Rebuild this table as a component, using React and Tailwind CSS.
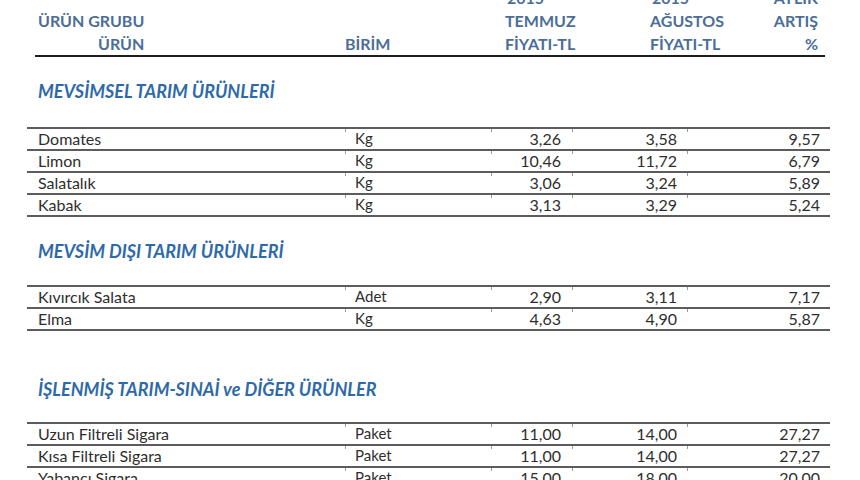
import React from "react";

const font = { fontFamily: "Lato, 'Open Sans', sans-serif" };

const sections = [
  {
    title: "MEVSİMSEL TARIM ÜRÜNLERİ",
    gapTop: "mt-[23px]",
    gapBottom: "mt-[24px]",
    rows: [
      ["Domates", "Kg", "3,26", "3,58", "9,57"],
      ["Limon", "Kg", "10,46", "11,72", "6,79"],
      ["Salatalık", "Kg", "3,06", "3,24", "5,89"],
      ["Kabak", "Kg", "3,13", "3,29", "5,24"],
    ],
  },
  {
    title: "MEVSİM DIŞI TARIM ÜRÜNLERİ",
    gapTop: "mt-[23px]",
    gapBottom: "mt-[22px]",
    rows: [
      ["Kıvırcık Salata", "Adet", "2,90", "3,11", "7,17"],
      ["Elma", "Kg", "4,63", "4,90", "5,87"],
    ],
  },
  {
    title: "İŞLENMİŞ TARIM-SINAİ ve DİĞER ÜRÜNLER",
    gapTop: "mt-[47px]",
    gapBottom: "mt-[21px]",
    rows: [
      ["Uzun Filtreli Sigara", "Paket", "11,00", "14,00", "27,27"],
      ["Kısa Filtreli Sigara", "Paket", "11,00", "14,00", "27,27"],
      ["Yabancı Sigara", "Paket", "15,00", "18,00", "20,00"],
    ],
  },
];

const tick =
  "relative before:content-[''] before:absolute before:left-0 before:top-0 before:h-[3px] before:w-px before:bg-[#9a9a9a]";

function Row({ r, last }) {
  return (
    <div
      className={
        "grid grid-cols-[318px_146px_81px_115px_143px] border-t-2 border-[#5c5c5c] text-[16px] leading-[20px] text-[#2e2e2e] " +
        (last ? "border-b-2 h-[24px]" : "h-[22px]")
      }
    >
      <div className="pl-[11px] whitespace-nowrap">{r[0]}</div>
      <div className={"pl-[10px] text-[15px] leading-[18px] " + tick}>{r[1]}</div>
      <div className={"pr-[11px] text-right " + tick}>{r[2]}</div>
      <div className={"pr-[10px] text-right " + tick}>{r[3]}</div>
      <div className={"pr-[10px] text-right " + tick}>{r[4]}</div>
    </div>
  );
}

export default function App() {
  return (
    <div className="w-[860px] h-[480px] overflow-hidden bg-white" style={font}>
      <div className="ml-[27px] w-[803px]">
        {/* Header */}
        <div className="mt-[-14px] ml-[8px] mr-[5px] border-b-2 border-[#1e1e1e] text-[16px] font-bold leading-[23px] text-[#4b6e98]">
          <div className="grid grid-cols-[310px_160px_145px_110px_65px]">
            <div></div>
            <div></div>
            <div className="pl-[2px]">2015</div>
            <div className="pl-[2px]">2015</div>
            <div className="text-right pr-[7px]">AYLIK</div>
          </div>
          <div className="grid grid-cols-[310px_160px_145px_110px_65px]">
            <div className="pl-[3px]">ÜRÜN GRUBU</div>
            <div></div>
            <div>TEMMUZ</div>
            <div>AĞUSTOS</div>
            <div className="text-right pr-[7px]">ARTIŞ</div>
          </div>
          <div className="grid grid-cols-[310px_160px_145px_110px_65px]">
            <div className="pl-[63px]">ÜRÜN</div>
            <div>BİRİM</div>
            <div>FİYATI-TL</div>
            <div>FİYATI-TL</div>
            <div className="text-right pr-[7px]">%</div>
          </div>
        </div>

        {sections.map((s, i) => (
          <div key={i}>
            <div
              className={
                s.gapTop +
                " pl-[11px] h-[23px] text-[18px] leading-[23px] font-bold italic text-[#2e6aa9] whitespace-nowrap"
              }
            >
              {s.title}
            </div>
            <div className={s.gapBottom}>
              {s.rows.map((r, j) => (
                <Row key={j} r={r} last={j === s.rows.length - 1} />
              ))}
            </div>
          </div>
        ))}
      </div>
    </div>
  );
}
